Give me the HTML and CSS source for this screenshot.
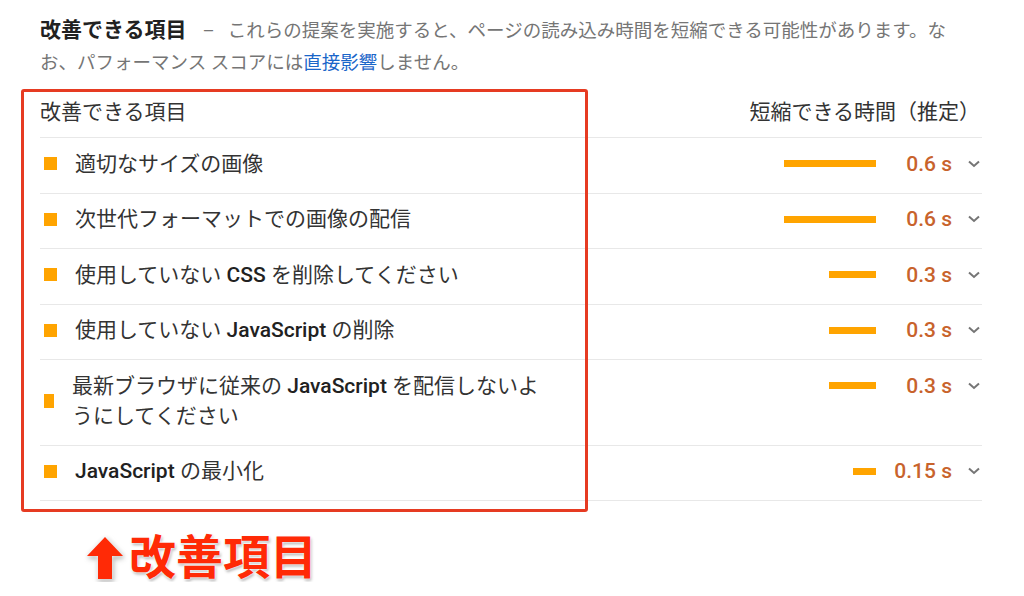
FILE: index.html
```html
<!DOCTYPE html>
<html lang="ja">
<head>
    <meta charset="UTF-8">
    <meta name="viewport" content="width=device-width, initial-scale=1.0">
    <title>改善できる項目</title>
    <link rel="stylesheet" href="styles.css">
</head>
<body>
    <div class="page">
        <p class="intro">
            <span class="intro-title">改善できる項目</span><span class="intro-dash">–</span>これらの提案を実施すると、ページの読み込み時間を短縮できる可能性があります。なお、パフォーマンス スコアには<a href="#" class="intro-link">直接影響</a>しません。
        </p>

        <div class="audits">
            <div class="audits-head">
                <span>改善できる項目</span>
                <span class="audits-head-right">短縮できる時間（推定）</span>
            </div>

            <div class="audit">
                <span class="audit-icon"></span>
                <span class="audit-title">適切なサイズの画像</span>
                <span class="audit-bar"><span class="bar-fill" style="width: 92px"></span></span>
                <span class="audit-value">0.6 s</span>
                <span class="audit-toggle"><svg width="12" height="8" viewBox="0 0 12 8"><path d="M1 1.5 L6 6 L11 1.5" fill="none" stroke="#757575" stroke-width="2"/></svg></span>
            </div>

            <div class="audit">
                <span class="audit-icon"></span>
                <span class="audit-title">次世代フォーマットでの画像の配信</span>
                <span class="audit-bar"><span class="bar-fill" style="width: 92px"></span></span>
                <span class="audit-value">0.6 s</span>
                <span class="audit-toggle"><svg width="12" height="8" viewBox="0 0 12 8"><path d="M1 1.5 L6 6 L11 1.5" fill="none" stroke="#757575" stroke-width="2"/></svg></span>
            </div>

            <div class="audit">
                <span class="audit-icon"></span>
                <span class="audit-title">使用していない <code>CSS</code> を削除してください</span>
                <span class="audit-bar"><span class="bar-fill" style="width: 47px"></span></span>
                <span class="audit-value">0.3 s</span>
                <span class="audit-toggle"><svg width="12" height="8" viewBox="0 0 12 8"><path d="M1 1.5 L6 6 L11 1.5" fill="none" stroke="#757575" stroke-width="2"/></svg></span>
            </div>

            <div class="audit">
                <span class="audit-icon"></span>
                <span class="audit-title">使用していない <code>JavaScript</code> の削除</span>
                <span class="audit-bar"><span class="bar-fill" style="width: 47px"></span></span>
                <span class="audit-value">0.3 s</span>
                <span class="audit-toggle"><svg width="12" height="8" viewBox="0 0 12 8"><path d="M1 1.5 L6 6 L11 1.5" fill="none" stroke="#757575" stroke-width="2"/></svg></span>
            </div>

            <div class="audit audit-tall">
                <span class="audit-icon"></span>
                <span class="audit-title">最新ブラウザに従来の <code>JavaScript</code> を配信しないようにしてください</span>
                <span class="audit-bar"><span class="bar-fill" style="width: 47px"></span></span>
                <span class="audit-value">0.3 s</span>
                <span class="audit-toggle"><svg width="12" height="8" viewBox="0 0 12 8"><path d="M1 1.5 L6 6 L11 1.5" fill="none" stroke="#757575" stroke-width="2"/></svg></span>
            </div>

            <div class="audit">
                <span class="audit-icon"></span>
                <span class="audit-title"><code>JavaScript</code> の最小化</span>
                <span class="audit-bar"><span class="bar-fill" style="width: 23px"></span></span>
                <span class="audit-value">0.15 s</span>
                <span class="audit-toggle"><svg width="12" height="8" viewBox="0 0 12 8"><path d="M1 1.5 L6 6 L11 1.5" fill="none" stroke="#757575" stroke-width="2"/></svg></span>
            </div>

            <!-- 赤枠の注釈 -->
            <div class="highlight"></div>
        </div>

        <div class="caption">
            <svg class="caption-arrow" width="36" height="42" viewBox="0 0 36 42"><path d="M18 0 L36 19 L25 19 L25 42 L11 42 L11 19 L0 19 Z" fill="#ff2a06"/></svg>
            <span>改善項目</span>
        </div>
    </div>
</body>
</html>
```

FILE: styles.css
```css
body {
    margin: 0;
    background-color: #ffffff;
    font-family: Roboto, "Noto Sans CJK JP", sans-serif;
    color: #333;
}

.page {
    padding: 14px 42px 0 40px;
}

.intro {
    margin: 0;
    max-width: 915px;
    font-size: 18.5px;
    line-height: 32px;
    color: #757575;
}

.intro-title {
    font-size: 21px;
    font-weight: 700;
    color: #212121;
}

.intro-dash {
    margin: 0 13px 0 16px;
}

.intro-link {
    color: #1a66c9;
    text-decoration: none;
}

.audits {
    position: relative;
    margin-top: 6px;
}

.audits-head {
    display: flex;
    justify-content: space-between;
    padding: 12px 2px 10px 0;
    font-size: 21px;
    line-height: 30px;
    color: #333;
    border-bottom: 1px solid #e8e8e8;
}

.audit {
    display: flex;
    align-items: center;
    padding: 10.5px 0 14px;
    font-size: 21px;
    line-height: 30px;
    border-bottom: 1px solid #e8e8e8;
}

.audit-tall {
    align-items: flex-start;
}

.audit-tall .audit-icon {
    align-self: center;
    width: 10px;
    height: 14px;
}

.audit-icon {
    width: 13px;
    height: 13px;
    margin: 0 18px 0 4px;
    flex-shrink: 0;
    background-color: #ffa400;
}

.audit-title {
    width: 480px;
    flex-shrink: 0;
    color: #333;
}

.audit-title code {
    font-family: Roboto, sans-serif;
    font-weight: 500;
    color: #212121;
}

.audit-bar {
    flex: 1;
    display: flex;
    justify-content: flex-end;
    height: 30px;
    align-items: center;
}

.bar-fill {
    height: 7px;
    background-color: #ffa400;
}

.audit-value {
    width: 76px;
    text-align: right;
    font-size: 21px;
    font-weight: 500;
    color: #c8632c;
}

.audit-toggle {
    width: 30px;
    height: 30px;
    display: flex;
    align-items: center;
    justify-content: flex-end;
    padding-right: 2px;
    box-sizing: border-box;
}

.highlight {
    position: absolute;
    top: 4px;
    left: -19px;
    width: 567px;
    height: 423px;
    box-sizing: border-box;
    border: 3px solid #e63b22;
    border-radius: 3px;
}

.caption {
    display: flex;
    align-items: center;
    gap: 6px;
    margin: 33px 0 0 47px;
    font-size: 47px;
    font-weight: 700;
    line-height: 48px;
    color: #ff2a06;
    text-shadow: 0 0 2px #fff, 0 0 3px #fff, 1px 2px 3px rgba(0, 0, 0, 0.35);
}

.caption-arrow {
    filter: drop-shadow(0 0 2px #fff) drop-shadow(1px 2px 2px rgba(0, 0, 0, 0.35));
}
```
